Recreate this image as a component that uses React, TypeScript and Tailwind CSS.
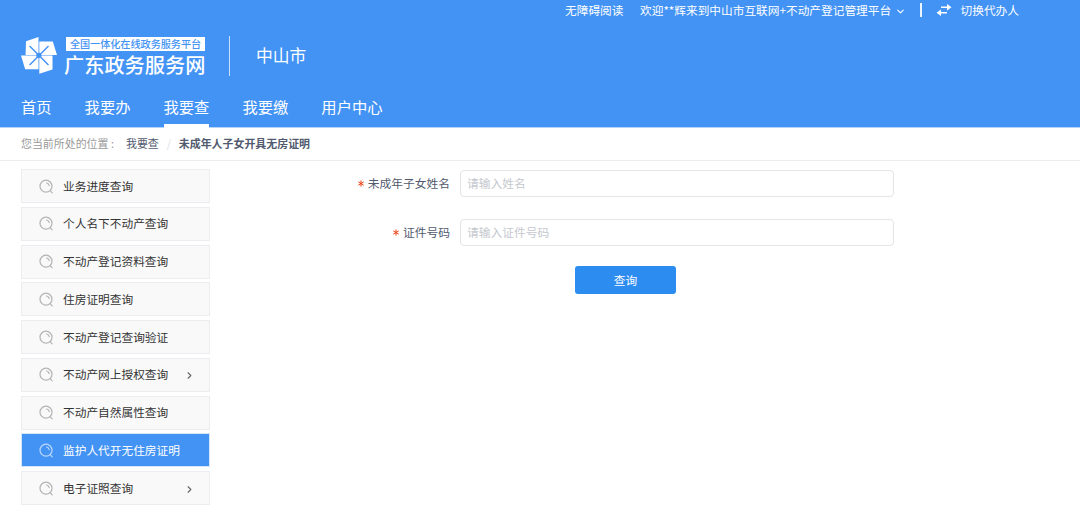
import React from 'react';
import { ChevronDown, ChevronRight } from 'lucide-react';

interface MenuItem {
  label: string;
  active?: boolean;
  expandable?: boolean;
}

const NAV_ITEMS = ['首页', '我要办', '我要查', '我要缴', '用户中心'];

const MENU_ITEMS: MenuItem[] = [
  { label: '业务进度查询' },
  { label: '个人名下不动产查询' },
  { label: '不动产登记资料查询' },
  { label: '住房证明查询' },
  { label: '不动产登记查询验证' },
  { label: '不动产网上授权查询', expandable: true },
  { label: '不动产自然属性查询' },
  { label: '监护人代开无住房证明', active: true },
  { label: '电子证照查询', expandable: true },
];

const Logo: React.FC = () => (
  <svg width="36" height="37" viewBox="0 0 36 37" className="mb-[2px] shrink-0">
    <g fill="#fff">
      <path d="M5 4.2L17.5 0V17.9H4.6Z" />
      <path d="M18.3 4.5H31.8L36 17.9H18.3Z" />
      <path d="M18.3 18.6H31.5V32.5L18.3 36.8Z" />
      <path d="M0 18.6H17.5V32.2H4.2Z" />
    </g>
    <path d="M8.6 9L27.5 27.9M27.5 9L8.6 27.9" stroke="#4393f5" strokeWidth="1.4" />
    <circle cx="17.9" cy="18.3" r="2.6" fill="#4393f5" />
  </svg>
);

const SwapIcon: React.FC = () => (
  <svg width="16" height="12" viewBox="0 0 16 12" fill="#fff">
    <path d="M5 2.5H11V0L15.5 3.3L11 6.6V4.1H5Z" />
    <path d="M11 7.9H5V5.4L.5 8.7L5 12V9.5H11Z" />
  </svg>
);

const SearchIcon: React.FC<{ active?: boolean }> = ({ active }) => (
  <svg
    width="15"
    height="15"
    viewBox="0 0 15 15"
    fill="none"
    strokeWidth="1.2"
    strokeLinecap="round"
    className={active ? 'stroke-[#b9d7fb]' : 'stroke-[#b4b4b4]'}
  >
    <circle cx="7" cy="7.2" r="6" />
    <path d="M11.2 11.6L13.2 13.8" />
    <path d="M7.6 4A3.4 3.4 0 0 1 10.2 6.7" />
  </svg>
);

const RequiredMark: React.FC = () => (
  <svg width="6" height="7" viewBox="0 0 6 7" className="mr-1" stroke="#ed4014" strokeWidth="1">
    <path d="M3 .4V6.6M.3 1.9L5.7 5.1M5.7 1.9L.3 5.1" />
  </svg>
);

const Header: React.FC = () => (
  <header className="flex h-[128px] flex-col border-b border-[#b4d4fb] bg-[#4393f5] text-white">
    <div className="flex h-5 items-center pl-[565px] text-[11.7px] whitespace-nowrap">
      <span className="w-[75px]">无障碍阅读</span>
      <span className="w-[255px]">欢迎**辉来到中山市互联网+不动产登记管理平台</span>
      <ChevronDown size={11} strokeWidth={2.4} className="mt-[2px]" />
      <span className="ml-[14px] h-[14px] w-[1.5px] bg-white/90" />
      <span className="ml-[14px] w-[25px]">
        <SwapIcon />
      </span>
      <span>切换代办人</span>
    </div>

    <div className="flex h-[71px] items-center pt-px pl-[21px] whitespace-nowrap">
      <Logo />
      <div className="mt-[2px] ml-2 w-[141px]">
        <div className="ml-px flex h-[14px] w-[139px] items-center justify-center bg-white text-[10.1px] font-medium text-[#4393f5]">
          全国一体化在线政务服务平台
        </div>
        <div className="mt-px -ml-px text-[20.2px] leading-[25px] font-medium">广东政务服务网</div>
      </div>
      <span className="ml-[23px] h-10 w-px bg-white/70" />
      <span className="ml-[26px] text-[16.8px]">中山市</span>
    </div>

    <nav className="flex h-9 gap-[33px] pl-[21px] text-[15.3px] whitespace-nowrap">
      {NAV_ITEMS.map((item) => (
        <a
          key={item}
          className={
            item === '我要查'
              ? 'h-[37px] border-b-4 border-white leading-[30px]'
              : 'h-9 leading-[30px]'
          }
        >
          {item}
        </a>
      ))}
    </nav>
  </header>
);

const Field: React.FC<{ label: string; placeholder: string }> = ({ label, placeholder }) => (
  <div className="flex h-[27px] items-center">
    <label className="flex w-[240px] items-center justify-end pb-px text-[11.75px] text-[#515a6e]">
      <RequiredMark />
      {label}
    </label>
    <input
      type="text"
      placeholder={placeholder}
      className="ml-[10px] h-[27px] w-[434px] rounded-[4px] border border-[#e3e5e9] bg-white px-[6px] pb-[2px] text-[11.75px] outline-none placeholder:text-[#c5c8ce]"
    />
  </div>
);

const App: React.FC = () => (
  <div className="h-[530px] w-[1080px] overflow-hidden bg-white font-['Noto_Sans_CJK_SC',sans-serif]">
    <Header />

    {/* Breadcrumb */}
    <div className="flex h-[33px] items-center border-b border-[#ededed] pb-px pl-[21px] text-[10.95px] whitespace-nowrap text-[#515a6e]">
      <span className="w-[105px] text-[#999]">您当前所处的位置 :</span>
      <span>我要查</span>
      <span className="w-5 text-center text-[#dcdee2]">/</span>
      <span className="font-bold">未成年人子女开具无房证明</span>
    </div>

    <div className="flex">
      <aside className="ml-[21px] flex w-[189px] flex-col gap-[3.75px] pt-2">
        {MENU_ITEMS.map(({ label, active, expandable }) => (
          <div
            key={label}
            className={`flex h-[34px] items-center border pl-[17px] text-[11.7px] whitespace-nowrap ${
              active
                ? 'border-[#d5e6fb] bg-[#4393f5] text-white'
                : 'border-[#ebedf0] bg-[#f9f9f9] text-[#333]'
            }`}
          >
            <SearchIcon active={active} />
            <span className="ml-[9px] pb-px">{label}</span>
            {expandable && (
              <ChevronRight size={11} strokeWidth={2.4} className="mt-0.5 mr-[14px] ml-auto text-[#666]" />
            )}
          </div>
        ))}
      </aside>

      <main className="pt-[9px]">
        <form className="flex flex-col gap-[22px]">
          <Field label="未成年子女姓名" placeholder="请输入姓名" />
          <Field label="证件号码" placeholder="请输入证件号码" />
        </form>
        <button
          type="button"
          className="mt-5 ml-[365px] h-7 w-[101px] rounded-[3px] bg-[#2d8cf0] pb-px text-[11.7px] text-white"
        >
          查询
        </button>
      </main>
    </div>
  </div>
);

export default App;
